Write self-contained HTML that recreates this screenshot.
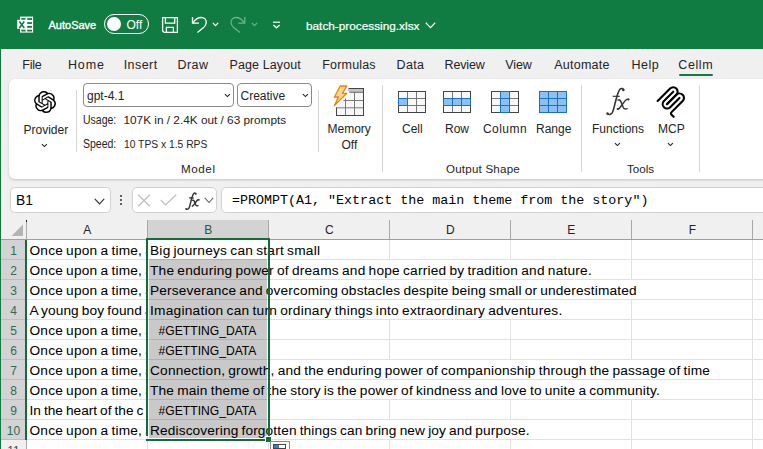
<!DOCTYPE html>
<html><head><meta charset="utf-8">
<style>
*{margin:0;padding:0;box-sizing:border-box}
html,body{width:763px;height:449px;overflow:hidden;background:#f0f0f0;font-family:"Liberation Sans",sans-serif;color:#242424}
.a{position:absolute}
.t{position:absolute;line-height:0;white-space:nowrap}
#title{left:0;top:0;width:763px;height:49px;background:#107c41}
#lborder{left:0;top:49px;width:1px;height:400px;background:#107c41}
.tab{font-size:12.5px;color:#242424}
#ribbon{left:9px;top:79px;width:800px;height:100px;background:#fff;border-radius:6px;box-shadow:0 1px 2.5px rgba(0,0,0,.2)}
.sep{position:absolute;width:1px;background:#d6d6d6}
.lbl{font-size:12px;color:#242424}
.glbl{font-size:11.6px;color:#242424}
.dd{position:absolute;border:1px solid #8a8a8a;border-radius:4px;background:#fff;height:24px}
.grid{left:1px;top:213px;width:762px;height:236px}
.cell{font-size:13.7px;color:#000;-webkit-text-stroke:0.04px #000}
.rh{font-size:12px;color:#444;text-align:center;width:25px}
</style></head><body>
<!-- title bar -->
<div id="title" class="a"></div>
<div id="lborder" class="a"></div>

<!-- excel icon -->
<svg class="a" style="left:16px;top:16px" width="18" height="18" viewBox="0 0 18 18">
  <rect x="4" y="0.6" width="13.1" height="16" fill="#fff"/>
  <g fill="#107c41">
  <rect x="5.3" y="2.1" width="4.3" height="1.8"/><rect x="11.2" y="2.1" width="4.8" height="1.8"/>
  <rect x="11.2" y="6.1" width="4.8" height="1.8"/><rect x="11.2" y="9.9" width="4.8" height="1.9"/>
  <rect x="5.3" y="13.7" width="4.3" height="1.8"/><rect x="11.2" y="13.7" width="4.8" height="1.8"/>
  </g>
  <rect x="1.2" y="3.8" width="8.7" height="9" fill="#fff"/>
  <path d="M3.3 5.6 L8.3 11.9 M8.3 5.6 L3.3 11.9" stroke="#107c41" stroke-width="1.6"/>
</svg>
<div class="t" style="left:48.5px;top:25px;font-size:11px;color:#fff;-webkit-text-stroke:0.35px #fff">AutoSave</div>
<div class="a" style="left:104px;top:14px;width:45px;height:20px;border:1.3px solid #fff;border-radius:10px"></div>
<div class="a" style="left:107px;top:17px;width:14px;height:14px;border-radius:7px;background:#fff"></div>
<div class="t" style="left:126.5px;top:25px;font-size:12px;color:#fff">Off</div>

<!-- save -->
<svg class="a" style="left:161px;top:16px" width="18" height="18" viewBox="0 0 18 18">
  <path d="M1.6 1.6 H16.4 V16.4 H3.1 L1.6 14.9 Z" fill="none" stroke="#fff" stroke-width="1.3"/>
  <path d="M4.4 1.6 V7.2 H13.7 V1.6" fill="none" stroke="#fff" stroke-width="1.3"/>
  <path d="M5.4 16.4 V11.3 H12.4 V16.4" fill="none" stroke="#fff" stroke-width="1.3"/>
</svg>
<!-- undo -->
<svg class="a" style="left:190px;top:16px" width="18" height="18" viewBox="0 0 18 18">
  <path d="M2.5 0.9 V7.2 H8.9" fill="none" stroke="#fff" stroke-width="1.3"/>
  <path d="M2.9 6.8 C5.2 3.2 8.2 1.5 11.3 1.5 C14.3 1.5 16.3 3.8 16.3 6.6 C16.3 8.6 15.2 10 13.6 11.6 L7.4 16.6" fill="none" stroke="#fff" stroke-width="1.3"/>
</svg>
<svg class="a" style="left:212px;top:22px" width="8" height="5" viewBox="0 0 8 5"><path d="M0.8 0.8 L3.5 3.6 L6.2 0.8" fill="none" stroke="#fff" stroke-width="1.2"/></svg>
<!-- redo dim -->
<svg class="a" style="left:229px;top:16px" width="18" height="18" viewBox="0 0 18 18">
  <path d="M15.8 0.9 V7.2 H9.2" fill="none" stroke="#6cb28a" stroke-width="1.3"/>
  <path d="M15.3 6.8 C13 3.2 10 1.5 7 1.5 C4 1.5 2 3.8 2 6.6 C2 8.6 3.1 10 4.7 11.6 L10.9 16.4" fill="none" stroke="#6cb28a" stroke-width="1.3"/>
</svg>
<svg class="a" style="left:251px;top:22px" width="8" height="5" viewBox="0 0 8 5"><path d="M0.8 0.8 L3.5 3.6 L6.2 0.8" fill="none" stroke="#6cb28a" stroke-width="1.2"/></svg>
<!-- customize -->
<svg class="a" style="left:272px;top:21px" width="9" height="8" viewBox="0 0 9 8">
  <line x1="1" y1="1.2" x2="8" y2="1.2" stroke="#fff" stroke-width="1.2"/>
  <path d="M1.4 4 L4.5 6.8 L7.6 4" fill="none" stroke="#fff" stroke-width="1.3"/>
</svg>
<div class="t" style="left:306px;top:26px;font-size:11.8px;color:#fff;-webkit-text-stroke:0.2px #fff">batch-processing.xlsx</div>
<svg class="a" style="left:425px;top:22px" width="11" height="7" viewBox="0 0 11 7"><path d="M0.8 0.8 L5.5 5.6 L10.2 0.8" fill="none" stroke="#fff" stroke-width="1.3"/></svg>

<!-- tabs -->
<div class="t tab" style="left:22.3px;top:64.5px;letter-spacing:-0.27px">File</div>
<div class="t tab" style="left:68.0px;top:64.5px;letter-spacing:0.83px">Home</div>
<div class="t tab" style="left:123.7px;top:64.5px;letter-spacing:0.44px">Insert</div>
<div class="t tab" style="left:177.4px;top:64.5px;letter-spacing:0.50px">Draw</div>
<div class="t tab" style="left:229.5px;top:64.5px;letter-spacing:0.11px">Page Layout</div>
<div class="t tab" style="left:322.3px;top:64.5px;letter-spacing:0.17px">Formulas</div>
<div class="t tab" style="left:396.6px;top:64.5px;letter-spacing:0.30px">Data</div>
<div class="t tab" style="left:444.5px;top:64.5px;letter-spacing:-0.14px">Review</div>
<div class="t tab" style="left:505.3px;top:64.5px;letter-spacing:-0.10px">View</div>
<div class="t tab" style="left:554.2px;top:64.5px;letter-spacing:0.26px">Automate</div>
<div class="t tab" style="left:631.6px;top:64.5px;letter-spacing:0.47px">Help</div>
<div class="t tab" style="left:678.3px;top:64.5px;letter-spacing:0.58px">Cellm</div>
<div class="a" style="left:679px;top:74px;width:34px;height:2px;background:#107c41;border-radius:1px"></div>

<!-- ribbon -->
<div id="ribbon" class="a"></div>

<!-- provider -->
<svg class="a" style="left:34px;top:91px" width="22" height="22" viewBox="0 0 24 24"><path fill="#000" d="M22.2819 9.8211a5.9847 5.9847 0 0 0-.5157-4.9108 6.0462 6.0462 0 0 0-6.5098-2.9A6.0651 6.0651 0 0 0 4.9807 4.1818a5.9847 5.9847 0 0 0-3.9977 2.9 6.0462 6.0462 0 0 0 .7427 7.0966 5.98 5.98 0 0 0 .511 4.9107 6.051 6.051 0 0 0 6.5146 2.9001A5.9847 5.9847 0 0 0 13.2599 24a6.0557 6.0557 0 0 0 5.7718-4.2058 5.9894 5.9894 0 0 0 3.9977-2.9001 6.0557 6.0557 0 0 0-.7475-7.0729zm-9.022 12.6081a4.4755 4.4755 0 0 1-2.8764-1.0408l.1419-.0804 4.7783-2.7582a.7948.7948 0 0 0 .3927-.6813v-6.7369l2.02 1.1686a.071.071 0 0 1 .038.052v5.5826a4.504 4.504 0 0 1-4.4945 4.4944zm-9.6607-4.1254a4.4708 4.4708 0 0 1-.5346-3.0137l.142.0852 4.783 2.7582a.7712.7712 0 0 0 .7806 0l5.8428-3.3685v2.3324a.0804.0804 0 0 1-.0332.0615L9.74 19.9502a4.4992 4.4992 0 0 1-6.1408-1.6464zM2.3408 7.8956a4.485 4.485 0 0 1 2.3655-1.9728V11.6a.7664.7664 0 0 0 .3879.6765l5.8144 3.3543-2.0201 1.1685a.0757.0757 0 0 1-.071 0l-4.8303-2.7865A4.504 4.504 0 0 1 2.3408 7.872zm16.5963 3.8558L13.1038 8.364 15.1192 7.2a.0757.0757 0 0 1 .071 0l4.8303 2.7913a4.4944 4.4944 0 0 1-.6765 8.1042v-5.6772a.79.79 0 0 0-.407-.667zm2.0107-3.0231l-.142-.0852-4.7735-2.7818a.7759.7759 0 0 0-.7854 0L9.409 9.2297V6.8974a.0662.0662 0 0 1 .0284-.0615l4.8303-2.7866a4.4992 4.4992 0 0 1 6.6802 4.66zM8.3065 12.863l-2.02-1.1638a.0804.0804 0 0 1-.038-.0567V6.0742a4.4992 4.4992 0 0 1 7.3757-3.4537l-.142.0805L8.704 5.459a.7948.7948 0 0 0-.3927.6813zm1.0976-2.3654l2.602-1.4998 2.6069 1.4998v2.9994l-2.5974 1.4997-2.6067-1.4997Z"/></svg>
<div class="t lbl" style="left:23.5px;top:130px">Provider</div>
<svg class="a" style="left:41px;top:143px" width="7" height="5" viewBox="0 0 7 5"><path d="M0.9 1.2 L3.4 3.6 L5.9 1.2" fill="none" stroke="#222" stroke-width="1.1"/></svg>
<div class="sep" style="left:76px;top:90px;height:62px"></div>

<!-- model -->
<div class="dd" style="left:83px;top:83px;width:151px"></div>
<div class="t lbl" style="left:87px;top:96px">gpt-4.1</div>
<svg class="a" style="left:224px;top:93px" width="7" height="5" viewBox="0 0 7 5"><path d="M0.9 1.2 L3.4 3.6 L5.9 1.2" fill="none" stroke="#222" stroke-width="1.1"/></svg>
<div class="dd" style="left:237px;top:83px;width:75px"></div>
<div class="t lbl" style="left:240.5px;top:96px">Creative</div>
<svg class="a" style="left:302px;top:93px" width="7" height="5" viewBox="0 0 7 5"><path d="M0.9 1.2 L3.4 3.6 L5.9 1.2" fill="none" stroke="#222" stroke-width="1.1"/></svg>
<div class="t lbl" style="left:83.3px;top:119.5px;font-size:12px;transform:scaleX(0.875);transform-origin:0 0">Usage:</div>
<div class="t lbl" style="left:123.5px;top:119.5px;font-size:11.8px">107K in / 2.4K out / 63 prompts</div>
<div class="t lbl" style="left:82.8px;top:143.5px;font-size:12px;transform:scaleX(0.875);transform-origin:0 0">Speed:</div>
<div class="t lbl" style="left:123.5px;top:143.5px;font-size:11.8px;transform:scaleX(0.872);transform-origin:0 0">10 TPS x 1.5 RPS</div>
<div class="t glbl" style="left:181px;top:169px;letter-spacing:0.6px">Model</div>
<div class="sep" style="left:318px;top:90px;height:62px"></div>

<!-- memory -->
<svg class="a" style="left:328px;top:82px" width="40" height="36" viewBox="0 0 40 36">
  <rect x="8.5" y="6.5" width="27" height="27" fill="#f7f7f7" stroke="#444" stroke-width="1"/>
  <rect x="9" y="7" width="26" height="3" fill="#c4c4c4"/>
  <line x1="8.5" y1="10.3" x2="35.5" y2="10.3" stroke="#444" stroke-width="0.8"/>
  <line x1="9" y1="18.5" x2="35" y2="18.5" stroke="#7a7a7a" stroke-width="1"/>
  <line x1="9" y1="25.8" x2="35" y2="25.8" stroke="#7a7a7a" stroke-width="1"/>
  <line x1="17.5" y1="10" x2="17.5" y2="33" stroke="#7a7a7a" stroke-width="1"/>
  <line x1="26.5" y1="10" x2="26.5" y2="33" stroke="#7a7a7a" stroke-width="1"/>
  <path d="M12.2 4 L18.8 4 L14.5 11.3 L18.8 11.3 L6.4 23.6 L10.5 15 L6.4 15 Z" fill="#fff" stroke="#fff" stroke-width="5.5" stroke-linejoin="round"/>
  <path d="M12.2 4 L18.8 4 L14.5 11.3 L18.8 11.3 L6.4 23.6 L10.5 15 L6.4 15 Z" fill="#f6d98c" stroke="#e8830f" stroke-width="1.3" stroke-linejoin="round"/>
</svg>
<div class="t lbl" style="left:327.5px;top:129px">Memory</div>
<div class="t lbl" style="left:341.5px;top:144.7px">Off</div>
<div class="sep" style="left:382px;top:85px;height:87px"></div>

<!-- output shape icons -->
<svg class="a" style="left:397px;top:91px" width="30" height="23" viewBox="0 0 30 23">
  <rect x="1.5" y="0.5" width="27" height="21" fill="#f8f8f8" stroke="#444" stroke-width="1"/>
  <line x1="10.5" y1="1" x2="10.5" y2="21" stroke="#777"/><line x1="19.5" y1="1" x2="19.5" y2="21" stroke="#777"/>
  <line x1="2" y1="7.5" x2="28" y2="7.5" stroke="#777"/><line x1="2" y1="14.5" x2="28" y2="14.5" stroke="#777"/>
  <rect x="1.5" y="7.5" width="9" height="7" fill="#8cc0ee" stroke="#1a6fc8" stroke-width="1"/>
</svg>
<div class="t lbl" style="left:402px;top:129px">Cell</div>
<svg class="a" style="left:442px;top:91px" width="30" height="23" viewBox="0 0 30 23">
  <rect x="1.5" y="0.5" width="27" height="21" fill="#f8f8f8" stroke="#444" stroke-width="1"/>
  <line x1="10.5" y1="1" x2="10.5" y2="21" stroke="#777"/><line x1="19.5" y1="1" x2="19.5" y2="21" stroke="#777"/>
  <line x1="2" y1="7.5" x2="28" y2="7.5" stroke="#777"/><line x1="2" y1="14.5" x2="28" y2="14.5" stroke="#777"/>
  <rect x="1.5" y="7.5" width="27" height="7" fill="#8cc0ee" stroke="#1a6fc8" stroke-width="1"/>
  <line x1="10.5" y1="7.5" x2="10.5" y2="14.5" stroke="#1a6fc8"/><line x1="19.5" y1="7.5" x2="19.5" y2="14.5" stroke="#1a6fc8"/>
</svg>
<div class="t lbl" style="left:445px;top:129px">Row</div>
<svg class="a" style="left:490px;top:91px" width="30" height="23" viewBox="0 0 30 23">
  <rect x="1.5" y="0.5" width="27" height="21" fill="#f8f8f8" stroke="#444" stroke-width="1"/>
  <line x1="10.5" y1="1" x2="10.5" y2="21" stroke="#777"/><line x1="19.5" y1="1" x2="19.5" y2="21" stroke="#777"/>
  <line x1="2" y1="7.5" x2="28" y2="7.5" stroke="#777"/><line x1="2" y1="14.5" x2="28" y2="14.5" stroke="#777"/>
  <rect x="10.5" y="0.5" width="9" height="21" fill="#8cc0ee" stroke="#1a6fc8" stroke-width="1"/>
  <line x1="10.5" y1="7.5" x2="19.5" y2="7.5" stroke="#1a6fc8"/><line x1="10.5" y1="14.5" x2="19.5" y2="14.5" stroke="#1a6fc8"/>
</svg>
<div class="t lbl" style="left:483px;top:129px;letter-spacing:0.45px">Column</div>
<svg class="a" style="left:538px;top:91px" width="30" height="23" viewBox="0 0 30 23">
  <rect x="1.5" y="0.5" width="27" height="21" fill="#8cc0ee" stroke="#1a6fc8" stroke-width="1"/>
  <line x1="10.5" y1="1" x2="10.5" y2="21" stroke="#1a6fc8"/><line x1="19.5" y1="1" x2="19.5" y2="21" stroke="#1a6fc8"/>
  <line x1="2" y1="7.5" x2="28" y2="7.5" stroke="#1a6fc8"/><line x1="2" y1="14.5" x2="28" y2="14.5" stroke="#1a6fc8"/>
</svg>
<div class="t lbl" style="left:536px;top:129px">Range</div>
<div class="t glbl" style="left:446px;top:169px;letter-spacing:0.2px">Output Shape</div>
<div class="sep" style="left:581px;top:85px;height:87px"></div>

<!-- tools -->
<div class="t lbl" style="left:592px;top:129px">Functions</div>
<svg class="a" style="left:614px;top:142px" width="7" height="5" viewBox="0 0 7 5"><path d="M0.9 1.2 L3.4 3.6 L5.9 1.2" fill="none" stroke="#222" stroke-width="1.1"/></svg>
<svg class="a" style="left:653.4px;top:82.8px" width="35.9" height="35.9" viewBox="0 0 195 195"><g fill="none" stroke="#000" stroke-width="11.5" stroke-linecap="round">
<path d="M25 97.8528L92.8823 29.9706C102.255 20.598 117.451 20.598 126.823 29.9706C136.196 39.3431 136.196 54.5391 126.823 63.9117L75.5581 115.177"/>
<path d="M76.2653 114.47L126.823 63.9117C136.196 54.5391 151.392 54.5391 160.765 63.9117L161.118 64.2652C170.491 73.6378 170.491 88.8338 161.118 98.2063L99.7248 159.6C96.6006 162.724 96.6006 167.789 99.7248 170.913L112.331 183.52"/>
<path d="M109.853 46.9411L59.6482 97.1457C50.2757 106.518 50.2757 121.714 59.6482 131.087C69.0208 140.459 84.2168 140.459 93.5894 131.087L143.794 80.8822"/></g></svg>
<div class="t lbl" style="left:658px;top:129px">MCP</div>
<svg class="a" style="left:667px;top:142px" width="7" height="5" viewBox="0 0 7 5"><path d="M0.9 1.2 L3.4 3.6 L5.9 1.2" fill="none" stroke="#222" stroke-width="1.1"/></svg>
<div class="t glbl" style="left:627px;top:169px">Tools</div>
<div class="sep" style="left:699px;top:85px;height:87px"></div>


<style>.fxs path{stroke-width:2.3px}</style>
<!-- fx big -->
<svg class="a" style="left:598px;top:82px" width="40" height="40" viewBox="0 0 40 40"><path d="M25.8 8.3 C25.3 6.5 23.5 5.8 22 7.2 C20.5 8.8 19.1 13.5 17.9 18 C16.9 22 15.9 27 14.6 30 C13.6 32.2 11.6 33.3 9.4 31.9" fill="none" stroke="#333" stroke-width="1.6"/>
<circle cx="25.3" cy="8.1" r="1.25" fill="#333"/><circle cx="9.5" cy="31.6" r="1.25" fill="#333"/>
<path d="M14.7 14.3 H21.8" stroke="#333" stroke-width="1.15"/>
<path d="M19.4 18.4 C20.9 17.4 22.2 17.9 22.9 19.6 L25.3 25.5 C26 27 27.3 27.4 29.6 26.3" fill="none" stroke="#333" stroke-width="1.45"/>
<path d="M30.8 17.4 C29.3 16.8 28.2 17.4 27 18.9 L22 25.5 C21 26.9 20 27.3 19.3 26.9" fill="none" stroke="#333" stroke-width="1.45"/>
<circle cx="30.5" cy="17.5" r="1.05" fill="#333"/><circle cx="19.6" cy="27" r="1.0" fill="#333"/></svg>
<!-- formula bar -->
<div class="a" style="left:9.5px;top:187px;width:101.5px;height:26px;background:#fff;border:1px solid #d1d1d1;border-radius:4.5px"></div>
<div class="t" style="left:16px;top:200.5px;font-size:13.8px;color:#000">B1</div>
<svg class="a" style="left:94px;top:198px" width="11" height="7" viewBox="0 0 11 7"><path d="M0.8 0.8 L5.5 5.8 L10.2 0.8" fill="none" stroke="#333" stroke-width="1.2"/></svg>
<div class="a" style="left:120px;top:195px;width:2px;height:2px;background:#333;border-radius:1px"></div>
<div class="a" style="left:120px;top:199px;width:2px;height:2px;background:#333;border-radius:1px"></div>
<div class="a" style="left:120px;top:203px;width:2px;height:2px;background:#333;border-radius:1px"></div>
<div class="a" style="left:132px;top:187px;width:85px;height:26px;background:#fff;border:1px solid #d1d1d1;border-radius:5px"></div>
<svg class="a" style="left:137px;top:194px" width="14" height="13" viewBox="0 0 14 13"><path d="M1 0.8 L13 12.2 M13 0.8 L1 12.2" stroke="#bdbdbd" stroke-width="1.2"/></svg>
<svg class="a" style="left:160px;top:194px" width="17" height="12" viewBox="0 0 17 12"><path d="M0.8 6 L5.5 11 L16.2 0.8" fill="none" stroke="#bdbdbd" stroke-width="1.2"/></svg>
<svg class="a fxs" style="left:180px;top:188.5px" width="25" height="25" viewBox="0 0 40 40"><path d="M25.8 8.3 C25.3 6.5 23.5 5.8 22 7.2 C20.5 8.8 19.1 13.5 17.9 18 C16.9 22 15.9 27 14.6 30 C13.6 32.2 11.6 33.3 9.4 31.9" fill="none" stroke="#333" stroke-width="1.6"/>
<circle cx="25.3" cy="8.1" r="1.25" fill="#333"/><circle cx="9.5" cy="31.6" r="1.25" fill="#333"/>
<path d="M14.7 14.3 H21.8" stroke="#333" stroke-width="1.15"/>
<path d="M19.4 18.4 C20.9 17.4 22.2 17.9 22.9 19.6 L25.3 25.5 C26 27 27.3 27.4 29.6 26.3" fill="none" stroke="#333" stroke-width="1.45"/>
<path d="M30.8 17.4 C29.3 16.8 28.2 17.4 27 18.9 L22 25.5 C21 26.9 20 27.3 19.3 26.9" fill="none" stroke="#333" stroke-width="1.45"/>
<circle cx="30.5" cy="17.5" r="1.05" fill="#333"/><circle cx="19.6" cy="27" r="1.0" fill="#333"/></svg>
<svg class="a" style="left:204px;top:197px" width="10" height="7" viewBox="0 0 10 7"><path d="M0.8 0.8 L5 5.5 L9.2 0.8" fill="none" stroke="#666" stroke-width="1.1"/></svg>
<div class="a" style="left:221px;top:187px;width:560px;height:26px;background:#fff;border:1px solid #d1d1d1;border-radius:5px"></div>
<div class="t" style="left:232px;top:200.5px;font-family:'Liberation Mono',monospace;font-size:13.35px;color:#000">=PROMPT(A1, "Extract the main theme from the story")</div>

<!-- grid -->
<div class="a" style="left:1px;top:240px;width:762px;height:209px;background:#fff"></div>

<div class="a" style="left:1px;top:240px;width:24px;height:200px;background:#d3d3d3"></div>
<div class="a" style="left:27px;top:259px;width:736px;height:1px;background:#e1e1e1"></div>
<div class="a" style="left:1px;top:259px;width:25px;height:1px;background:#bdbdbd"></div>
<div class="a" style="left:27px;top:279px;width:736px;height:1px;background:#e1e1e1"></div>
<div class="a" style="left:1px;top:279px;width:25px;height:1px;background:#bdbdbd"></div>
<div class="a" style="left:27px;top:299px;width:736px;height:1px;background:#e1e1e1"></div>
<div class="a" style="left:1px;top:299px;width:25px;height:1px;background:#bdbdbd"></div>
<div class="a" style="left:27px;top:319px;width:736px;height:1px;background:#e1e1e1"></div>
<div class="a" style="left:1px;top:319px;width:25px;height:1px;background:#bdbdbd"></div>
<div class="a" style="left:27px;top:339px;width:736px;height:1px;background:#e1e1e1"></div>
<div class="a" style="left:1px;top:339px;width:25px;height:1px;background:#bdbdbd"></div>
<div class="a" style="left:27px;top:359px;width:736px;height:1px;background:#e1e1e1"></div>
<div class="a" style="left:1px;top:359px;width:25px;height:1px;background:#bdbdbd"></div>
<div class="a" style="left:27px;top:379px;width:736px;height:1px;background:#e1e1e1"></div>
<div class="a" style="left:1px;top:379px;width:25px;height:1px;background:#bdbdbd"></div>
<div class="a" style="left:27px;top:399px;width:736px;height:1px;background:#e1e1e1"></div>
<div class="a" style="left:1px;top:399px;width:25px;height:1px;background:#bdbdbd"></div>
<div class="a" style="left:27px;top:419px;width:736px;height:1px;background:#e1e1e1"></div>
<div class="a" style="left:1px;top:419px;width:25px;height:1px;background:#bdbdbd"></div>
<div class="a" style="left:27px;top:439px;width:736px;height:1px;background:#e1e1e1"></div>
<div class="a" style="left:1px;top:439px;width:25px;height:1px;background:#bdbdbd"></div>
<div class="a" style="left:27px;top:459px;width:736px;height:1px;background:#e1e1e1"></div>
<div class="a" style="left:1px;top:459px;width:25px;height:1px;background:#bdbdbd"></div>
<div class="a" style="left:147px;top:240px;width:1px;height:209px;background:#e1e1e1"></div>
<div class="a" style="left:268px;top:240px;width:1px;height:209px;background:#e1e1e1"></div>
<div class="a" style="left:389px;top:240px;width:1px;height:209px;background:#e1e1e1"></div>
<div class="a" style="left:510px;top:240px;width:1px;height:209px;background:#e1e1e1"></div>
<div class="a" style="left:631px;top:240px;width:1px;height:209px;background:#e1e1e1"></div>
<div class="a" style="left:752px;top:240px;width:1px;height:209px;background:#e1e1e1"></div>
<div class="a" style="left:389px;top:260px;width:1px;height:19px;background:#fff"></div>
<div class="a" style="left:510px;top:260px;width:1px;height:19px;background:#fff"></div>
<div class="a" style="left:389px;top:280px;width:1px;height:19px;background:#fff"></div>
<div class="a" style="left:510px;top:280px;width:1px;height:19px;background:#fff"></div>
<div class="a" style="left:631px;top:280px;width:1px;height:19px;background:#fff"></div>
<div class="a" style="left:389px;top:300px;width:1px;height:19px;background:#fff"></div>
<div class="a" style="left:510px;top:300px;width:1px;height:19px;background:#fff"></div>
<div class="a" style="left:389px;top:360px;width:1px;height:19px;background:#fff"></div>
<div class="a" style="left:510px;top:360px;width:1px;height:19px;background:#fff"></div>
<div class="a" style="left:631px;top:360px;width:1px;height:19px;background:#fff"></div>
<div class="a" style="left:389px;top:380px;width:1px;height:19px;background:#fff"></div>
<div class="a" style="left:510px;top:380px;width:1px;height:19px;background:#fff"></div>
<div class="a" style="left:631px;top:380px;width:1px;height:19px;background:#fff"></div>
<div class="a" style="left:389px;top:420px;width:1px;height:19px;background:#fff"></div>
<div class="a" style="left:510px;top:420px;width:1px;height:19px;background:#fff"></div>
<div class="a" style="left:147px;top:220px;width:121px;height:19px;background:#d3d3d3"></div>
<div class="a" style="left:26px;top:220px;width:1px;height:19px;background:#a8a8a8"></div>
<div class="a" style="left:147px;top:220px;width:1px;height:19px;background:#a8a8a8"></div>
<div class="a" style="left:268px;top:220px;width:1px;height:19px;background:#a8a8a8"></div>
<div class="a" style="left:389px;top:220px;width:1px;height:19px;background:#a8a8a8"></div>
<div class="a" style="left:510px;top:220px;width:1px;height:19px;background:#a8a8a8"></div>
<div class="a" style="left:631px;top:220px;width:1px;height:19px;background:#a8a8a8"></div>
<div class="a" style="left:752px;top:220px;width:1px;height:19px;background:#a8a8a8"></div>
<div class="a" style="left:1px;top:239px;width:762px;height:1px;background:#9e9e9e"></div>
<div class="a" style="left:26px;top:219.5px;width:1px;height:2px;background:#222"></div>
<div class="a" style="left:1px;top:440px;width:25px;height:9px;background:#f0f0f0"></div>
<div class="a" style="left:26px;top:440px;width:1px;height:9px;background:#a8a8a8"></div>
<svg class="a" style="left:11px;top:224px" width="13" height="13" viewBox="0 0 13 13"><path d="M12 0.5 V12 H0.5 Z" fill="#b4b4b4"/></svg>
<div class="t" style="left:57.3px;width:60px;text-align:center;top:230px;font-size:12px;color:#242424">A</div>
<div class="t" style="left:178.3px;width:60px;text-align:center;top:230px;font-size:12px;color:#1b5e36">B</div>
<div class="t" style="left:299.3px;width:60px;text-align:center;top:230px;font-size:12px;color:#242424">C</div>
<div class="t" style="left:420.3px;width:60px;text-align:center;top:230px;font-size:12px;color:#242424">D</div>
<div class="t" style="left:541.3px;width:60px;text-align:center;top:230px;font-size:12px;color:#242424">E</div>
<div class="t" style="left:662.3px;width:60px;text-align:center;top:230px;font-size:12px;color:#242424">F</div>
<div class="t rh" style="left:1px;top:250.5px;color:#2a6e55">1</div>
<div class="t rh" style="left:1px;top:270.5px;color:#2a6e55">2</div>
<div class="t rh" style="left:1px;top:290.5px;color:#2a6e55">3</div>
<div class="t rh" style="left:1px;top:310.5px;color:#2a6e55">4</div>
<div class="t rh" style="left:1px;top:330.5px;color:#2a6e55">5</div>
<div class="t rh" style="left:1px;top:350.5px;color:#2a6e55">6</div>
<div class="t rh" style="left:1px;top:370.5px;color:#2a6e55">7</div>
<div class="t rh" style="left:1px;top:390.5px;color:#2a6e55">8</div>
<div class="t rh" style="left:1px;top:410.5px;color:#2a6e55">9</div>
<div class="t rh" style="left:1px;top:430.5px;color:#2a6e55">10</div>
<div class="t rh" style="left:1px;top:450.5px;color:#444">11</div>
<div class="a" style="left:149px;top:259px;width:118px;height:179px;background:rgba(0,0,0,0.21)"></div>
<div class="a" style="left:27px;top:240px;width:120px;height:200px;overflow:hidden">
<div class="t cell" style="left:2.5px;top:10.5px;letter-spacing:0.2px;word-spacing:-0.9px">Once upon a time, a young</div>
<div class="t cell" style="left:2.5px;top:30.5px;letter-spacing:0.2px;word-spacing:-0.9px">Once upon a time, a young</div>
<div class="t cell" style="left:2.5px;top:50.5px;letter-spacing:0.2px;word-spacing:-0.9px">Once upon a time, a young</div>
<div class="t cell" style="left:2.5px;top:70.5px;letter-spacing:0.11px;word-spacing:-0.9px">A young boy found a</div>
<div class="t cell" style="left:2.5px;top:90.5px;letter-spacing:0.2px;word-spacing:-0.9px">Once upon a time, a young</div>
<div class="t cell" style="left:2.5px;top:110.5px;letter-spacing:0.2px;word-spacing:-0.9px">Once upon a time, a young</div>
<div class="t cell" style="left:2.5px;top:130.5px;letter-spacing:0.2px;word-spacing:-0.9px">Once upon a time, a young</div>
<div class="t cell" style="left:2.5px;top:150.5px;letter-spacing:0.2px;word-spacing:-0.9px">Once upon a time, a young</div>
<div class="t cell" style="left:2.5px;top:170.5px;letter-spacing:0.02px;word-spacing:-0.9px">In the heart of the c</div>
<div class="t cell" style="left:2.5px;top:190.5px;letter-spacing:0.2px;word-spacing:-0.9px">Once upon a time, a young</div>
</div>
<div class="t cell" style="left:150px;top:250.5px;letter-spacing:0.2296px;word-spacing:-0.9px">Big journeys can start small</div>
<div class="t cell" style="left:150px;top:270.5px;letter-spacing:0.2159px;word-spacing:-0.9px">The enduring power of dreams and hope carried by tradition and nature.</div>
<div class="t cell" style="left:150px;top:290.5px;letter-spacing:0.1554px;word-spacing:-0.9px">Perseverance and overcoming obstacles despite being small or underestimated</div>
<div class="t cell" style="left:150px;top:310.5px;letter-spacing:0.2424px;word-spacing:-0.9px">Imagination can turn ordinary things into extraordinary adventures.</div>
<div class="t cell" style="left:147px;width:121px;text-align:center;top:330.5px;transform:scaleX(0.885)">#GETTING_DATA</div>
<div class="t cell" style="left:147px;width:121px;text-align:center;top:350.5px;transform:scaleX(0.885)">#GETTING_DATA</div>
<div class="t cell" style="left:150px;top:370.5px;letter-spacing:0.1953px;word-spacing:-0.9px">Connection, growth, and the enduring power of companionship through the passage of time</div>
<div class="t cell" style="left:150px;top:390.5px;letter-spacing:0.1805px;word-spacing:-0.9px">The main theme of the story is the power of kindness and love to unite a community.</div>
<div class="t cell" style="left:147px;width:121px;text-align:center;top:410.5px;transform:scaleX(0.885)">#GETTING_DATA</div>
<div class="t cell" style="left:150px;top:430.5px;letter-spacing:0.1300px;word-spacing:-0.9px">Rediscovering forgotten things can bring new joy and purpose.</div>
<div class="a" style="left:25px;top:240px;width:2px;height:200px;background:#0f6e3b"></div>
<div class="a" style="left:146px;top:238px;width:124px;height:198px;border:2px solid #0f6e3b;border-bottom:none"></div>
<div class="a" style="left:146px;top:439px;width:119px;height:2px;background:#0f6e3b"></div>
<div class="a" style="left:265px;top:436px;width:7px;height:7px;background:#0f6e3b;border:1px solid #fff"></div>
<div class="a" style="left:270px;top:441px;width:20px;height:10px;background:#fff;border:1px solid #8f8f8f"></div>
<div class="a" style="left:273px;top:444px;width:13px;height:5px;background:#fff;border:1px solid #444"></div>
<div class="a" style="left:274px;top:445px;width:5px;height:3px;background:#3a7bd5"></div>
</body></html>
